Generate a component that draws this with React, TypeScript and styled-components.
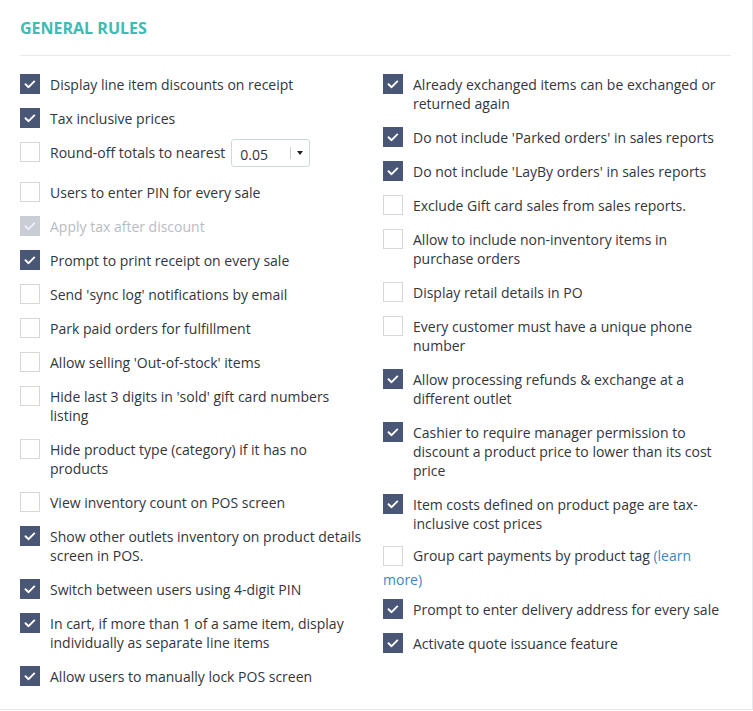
import styled, { createGlobalStyle } from "styled-components";

const GlobalStyle = createGlobalStyle`
  html, body {
    margin: 0;
    padding: 0;
    background: #ffffff;
  }
  body {
    font-family: "Open Sans", "Liberation Sans", sans-serif;
    color: #32363d;
  }
`;

const Card = styled.div`
  width: 753px;
  height: 710px;
  box-sizing: border-box;
  background: #ffffff;
  border-right: 1px solid #e4e8ed;
  border-bottom: 1px solid #e4e8ed;
  padding: 18px 21px 0 20px;
`;

const Title = styled.h2`
  margin: 0;
  font-size: 16px;
  font-weight: 700;
  line-height: 21px;
  color: #3bbcb4;
`;

const Divider = styled.div`
  height: 1px;
  background: #e8ebee;
  margin: 16px 0 18px;
`;

const Columns = styled.div`
  display: grid;
  grid-template-columns: 347px 348px;
  column-gap: 16px;
  align-items: start;
`;

const Column = styled.div`
  display: flex;
  flex-direction: column;
  gap: 14px;
`;

const Row = styled.label<{ $inline?: boolean }>`
  display: ${(p) => (p.$inline ? "block" : "flex")};
  align-items: flex-start;
  gap: 10px;
  font-size: 14px;
  line-height: ${(p) => (p.$inline ? "24px" : "19px")};
  margin: ${(p) => (p.$inline ? "-3px 0 -7px" : "0")};
  color: #32363d;
  cursor: pointer;
`;

const Box = styled.span<{ $checked?: boolean; $disabled?: boolean; $inline?: boolean }>`
  flex: none;
  display: ${(p) => (p.$inline ? "inline-flex" : "flex")};
  align-items: center;
  justify-content: center;
  box-sizing: border-box;
  width: 20px;
  height: 20px;
  margin-right: ${(p) => (p.$inline ? "10px" : "0")};
  vertical-align: ${(p) => (p.$inline ? "-5px" : "baseline")};
  background: ${(p) =>
    p.$disabled ? "#c9cdd6" : p.$checked ? "#4a5675" : "#ffffff"};
  border: ${(p) => (p.$checked ? "none" : "1px solid #dbd6d1")};
`;

const Label = styled.span<{ $disabled?: boolean }>`
  padding-top: 1px;
  color: ${(p) => (p.$disabled ? "#b8bcc3" : "#32363d")};
`;

const InlineText = styled.span`
  color: #32363d;
`;

const Link = styled.a`
  color: #3a88c9;
  text-decoration: none;
`;

const Select = styled.div`
  display: inline-flex;
  align-items: center;
  box-sizing: border-box;
  width: 79px;
  height: 28px;
  margin: -3px 0 1px -4px;
  padding: 0 6px 0 8px;
  border: 1px solid #cfd9dc;
  border-radius: 3px;
  font-size: 14px;
  color: #32363d;
`;

const SelectValue = styled.span`
  flex: 1;
  padding-top: 2px;
`;

const SelectSep = styled.span`
  width: 1px;
  height: 12px;
  background: #c9cfd3;
  margin-right: 6px;
`;

const Caret = styled.span`
  width: 0;
  height: 0;
  border-left: 3.5px solid transparent;
  border-right: 3.5px solid transparent;
  border-top: 4px solid #222;
`;

const Check = ({ light }: { light?: boolean }) => (
  <svg width="20" height="20" viewBox="0 0 20 20">
    <polyline
      points="5.5,10.2 8.6,13.2 14.3,7.4"
      fill="none"
      stroke={light ? "#eef0f4" : "#ffffff"}
      strokeWidth="1.9"
      strokeLinecap="round"
      strokeLinejoin="round"
    />
  </svg>
);

type Rule = {
  text: string;
  checked?: boolean;
  disabled?: boolean;
  select?: boolean;
  learn?: boolean;
};

const leftRules: Rule[] = [
  { text: "Display line item discounts on receipt", checked: true },
  { text: "Tax inclusive prices", checked: true },
  { text: "Round-off totals to nearest", select: true },
  { text: "Users to enter PIN for every sale" },
  { text: "Apply tax after discount", checked: true, disabled: true },
  { text: "Prompt to print receipt on every sale", checked: true },
  { text: "Send 'sync log' notifications by email" },
  { text: "Park paid orders for fulfillment" },
  { text: "Allow selling 'Out-of-stock' items" },
  { text: "Hide last 3 digits in 'sold' gift card numbers listing" },
  { text: "Hide product type (category) if it has no products" },
  { text: "View inventory count on POS screen" },
  { text: "Show other outlets inventory on product details screen in POS.", checked: true },
  { text: "Switch between users using 4-digit PIN", checked: true },
  {
    text: "In cart, if more than 1 of a same item, display individually as separate line items",
    checked: true,
  },
  { text: "Allow users to manually lock POS screen", checked: true },
];

const rightRules: Rule[] = [
  { text: "Already exchanged items can be exchanged or returned again", checked: true },
  { text: "Do not include 'Parked orders' in sales reports", checked: true },
  { text: "Do not include 'LayBy orders' in sales reports", checked: true },
  { text: "Exclude Gift card sales from sales reports." },
  { text: "Allow to include non-inventory items in purchase orders" },
  { text: "Display retail details in PO" },
  { text: "Every customer must have a unique phone number" },
  { text: "Allow processing refunds & exchange at a different outlet", checked: true },
  {
    text: "Cashier to require manager permission to discount a product price to lower than its cost price",
    checked: true,
  },
  {
    text: "Item costs defined on product page are tax-inclusive cost prices",
    checked: true,
  },
  { text: "Group cart payments by product tag", learn: true },
  { text: "Prompt to enter delivery address for every sale", checked: true },
  { text: "Activate quote issuance feature", checked: true },
];

const RuleRow = ({ rule }: { rule: Rule }) => {
  const box = (
    <Box $checked={rule.checked} $disabled={rule.disabled} $inline={rule.learn}>
      {rule.checked && <Check light={rule.disabled} />}
    </Box>
  );

  if (rule.learn) {
    return (
      <Row $inline>
        {box}
        <InlineText>
          {rule.text} <Link href="#">(learn more)</Link>
        </InlineText>
      </Row>
    );
  }

  return (
    <Row>
      {box}
      <Label $disabled={rule.disabled}>{rule.text}</Label>
      {rule.select && (
        <Select>
          <SelectValue>0.05</SelectValue>
          <SelectSep />
          <Caret />
        </Select>
      )}
    </Row>
  );
};

export default function App() {
  return (
    <>
      <GlobalStyle />
      <Card>
        <Title>GENERAL RULES</Title>
        <Divider />
        <Columns>
          <Column>
            {leftRules.map((r) => (
              <RuleRow key={r.text} rule={r} />
            ))}
          </Column>
          <Column>
            {rightRules.map((r) => (
              <RuleRow key={r.text} rule={r} />
            ))}
          </Column>
        </Columns>
      </Card>
    </>
  );
}
